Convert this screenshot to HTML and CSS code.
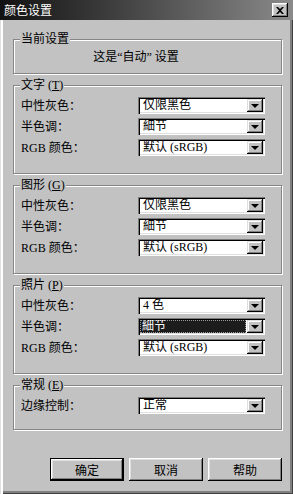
FILE: index.html
```html
<!DOCTYPE html>
<html lang="zh-CN">
<head>
<meta charset="utf-8">
<title>颜色设置</title>
<link rel="stylesheet" href="styles.css">
</head>
<body>
<div class="window">
  <div class="titlebar">
    <span class="title">颜色设置</span>
    <span class="close">
      <svg width="8" height="7" viewBox="0 0 8 7"><path d="M0 0h2l2 2 2-2h2L5 3.5 8 7H6L4 5 2 7H0l3-3.5z" fill="#000"/></svg>
    </span>
  </div>
  <div class="body">
    <fieldset class="group current">
      <legend>当前设置</legend>
      <div class="current-text">这是“自动” 设置</div>
    </fieldset>

    <fieldset class="group">
      <legend>文字 (<u>T</u>)</legend>
      <div class="row"><span class="label">中性灰色：</span><div class="select"><span class="value">仅限黑色</span><span class="arrow"></span></div></div>
      <div class="row"><span class="label">半色调：</span><div class="select"><span class="value">細节</span><span class="arrow"></span></div></div>
      <div class="row"><span class="label">RGB 颜色：</span><div class="select"><span class="value">默认 (sRGB)</span><span class="arrow"></span></div></div>
    </fieldset>

    <fieldset class="group">
      <legend>图形 (<u>G</u>)</legend>
      <div class="row"><span class="label">中性灰色：</span><div class="select"><span class="value">仅限黑色</span><span class="arrow"></span></div></div>
      <div class="row"><span class="label">半色调：</span><div class="select"><span class="value">細节</span><span class="arrow"></span></div></div>
      <div class="row"><span class="label">RGB 颜色：</span><div class="select"><span class="value">默认 (sRGB)</span><span class="arrow"></span></div></div>
    </fieldset>

    <fieldset class="group">
      <legend>照片 (<u>P</u>)</legend>
      <div class="row"><span class="label">中性灰色：</span><div class="select"><span class="value">4 色</span><span class="arrow"></span></div></div>
      <div class="row"><span class="label">半色调：</span><div class="select"><span class="value selected">細节</span><span class="arrow"></span></div></div>
      <div class="row"><span class="label">RGB 颜色：</span><div class="select"><span class="value">默认 (sRGB)</span><span class="arrow"></span></div></div>
    </fieldset>

    <fieldset class="group last">
      <legend>常规 (<u>E</u>)</legend>
      <div class="row"><span class="label">边缘控制：</span><div class="select"><span class="value">正常</span><span class="arrow"></span></div></div>
    </fieldset>

    <div class="buttons">
      <button class="btn default">确定</button>
      <button class="btn">取消</button>
      <button class="btn">帮助</button>
    </div>
  </div>
</div>
</body>
</html>
```

FILE: styles.css
```css
html, body {
  margin: 0;
  padding: 0;
  background: #c2c2c2;
}

body {
  font-family: "Liberation Serif", "Noto Sans CJK SC", serif;
  font-size: 12px;
  color: #000;
}

.window {
  width: 293px;
  height: 494px;
  display: flex;
  flex-direction: column;
  box-sizing: border-box;
  background: #c2c2c2;
}

.titlebar {
  height: 20px;
  flex: none;
  display: flex;
  align-items: center;
  padding-left: 4px;
  background: linear-gradient(to right, #121212 0%, #3a3a3a 35%, #8a8a8a 100%);
}

.title {
  color: #fff;
  font-family: "Noto Sans CJK SC", sans-serif;
  font-size: 12px;
  line-height: 14px;
}

.close {
  margin-left: auto;
  margin-right: 5px;
  width: 16px;
  height: 14px;
  display: flex;
  align-items: center;
  justify-content: center;
  background: #c2c2c2;
  box-shadow: inset -1px -1px 0 #000, inset 1px 1px 0 #fff, inset -2px -2px 0 #808080, inset 2px 2px 0 #dfdfdf;
}

.body {
  flex: 1;
  display: flex;
  flex-direction: column;
  padding: 0 11px 0 13px;
  box-shadow: inset 1px 0 0 #dfdfdf, inset 3px 0 0 #fff, inset -1px -1px 0 #404040, inset -3px -3px 0 #808080;
}

.group {
  margin: 5px 0 0 0;
  padding: 5px 14px 17px 7px;
  min-width: 0;
  border: 1px solid #868686;
  box-shadow: inset 1px 1px 0 #fff, 1px 1px 0 #fff;
}

.group.current {
  margin-top: 13px;
  padding: 4px 14px 9px 7px;
}

.group.last {
  padding-bottom: 15px;
}

.group legend {
  padding: 0 1px;
  margin-left: -1px;
  line-height: 13px;
  height: 13px;
  background: #c2c2c2;
  white-space: nowrap;
}

.current-text {
  line-height: 14px;
  text-align: center;
  padding-right: 16px;
  white-space: nowrap;
}

.row {
  display: flex;
  align-items: center;
  height: 17px;
}

.row + .row {
  margin-top: 4px;
}

.label {
  width: 117px;
  flex: none;
  line-height: 14px;
  white-space: nowrap;
}

.select {
  width: 127px;
  height: 17px;
  box-sizing: border-box;
  padding: 2px;
  display: flex;
  background: #fff;
  box-shadow: inset 1px 1px 0 #7a7a7a, inset 2px 2px 0 #000, inset -1px -1px 0 #fff, inset -2px -2px 0 #dfdfdf;
}

.value {
  flex: 1;
  padding-left: 3px;
  line-height: 13px;
  white-space: nowrap;
  overflow: hidden;
}

.value.selected {
  background: #1c1c1c;
  color: #fff;
  padding-left: 2px;
  margin-right: 1px;
  outline: 1px dotted #9a9a9a;
  outline-offset: -1px;
}

.arrow {
  width: 16px;
  height: 13px;
  flex: none;
  position: relative;
  background: #c2c2c2;
  box-shadow: inset -1px -1px 0 #000, inset 1px 1px 0 #dfdfdf, inset -2px -2px 0 #808080, inset 2px 2px 0 #fff;
}

.arrow::after {
  content: "";
  position: absolute;
  left: 4px;
  top: 5px;
  border-left: 4px solid transparent;
  border-right: 4px solid transparent;
  border-top: 4px solid #000;
}

.buttons {
  display: flex;
  justify-content: flex-end;
  gap: 5px;
  margin-top: 28px;
}

.btn {
  width: 74px;
  height: 23px;
  padding: 0;
  border: none;
  background: #c2c2c2;
  font-family: "Noto Sans CJK SC", sans-serif;
  font-size: 12px;
  color: #000;
  box-shadow: inset -1px -1px 0 #000, inset 1px 1px 0 #fff, inset -2px -2px 0 #808080, inset 2px 2px 0 #dfdfdf;
}

.btn.default {
  box-shadow: inset 0 0 0 1px #000, inset -2px -2px 0 #000, inset 2px 2px 0 #fff, inset -3px -3px 0 #808080, inset 3px 3px 0 #dfdfdf;
}
```
